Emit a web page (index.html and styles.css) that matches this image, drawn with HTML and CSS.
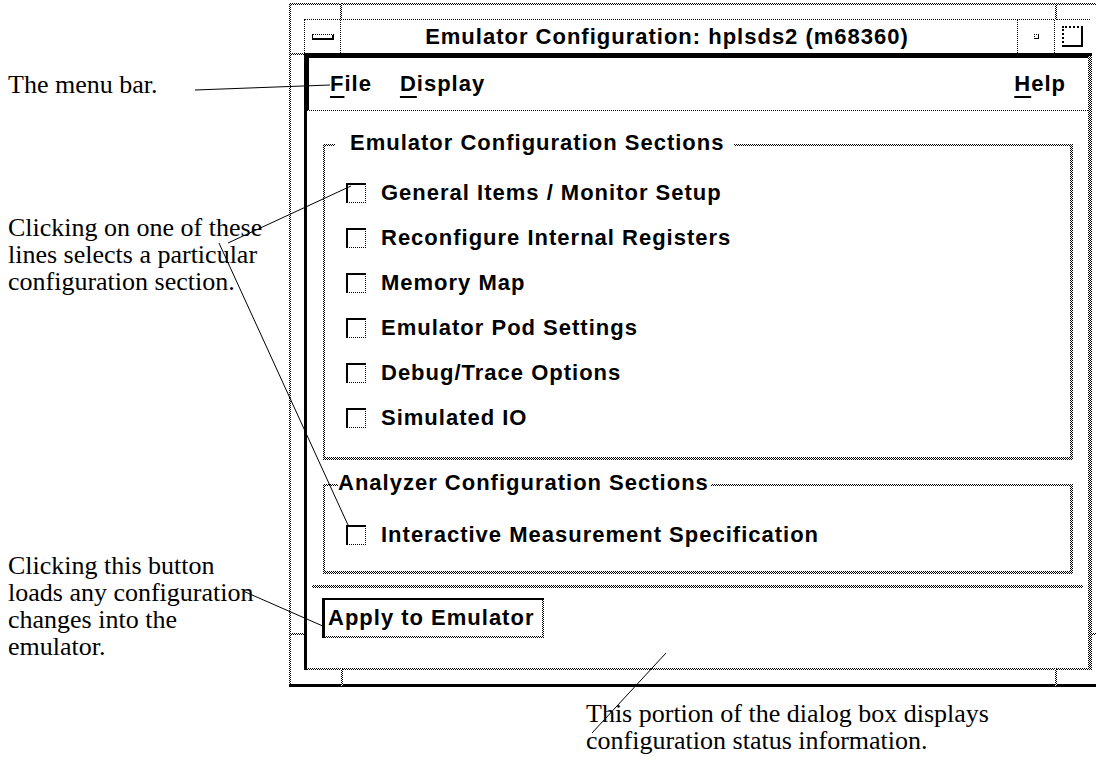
FILE: index.html
```html
<!DOCTYPE html>
<html lang="en">
<head>
    <meta charset="UTF-8">
    <title>Emulator Configuration</title>
    <link rel="stylesheet" href="styles.css">
</head>
<body>
<div class="page">
    <div class="sheet">
        <div class="notes">
            <p class="note note-menu">The menu bar.</p>
            <p class="note note-sections">Clicking on one of these<br>lines selects a particular<br>configuration section.</p>
            <p class="note note-apply">Clicking this button<br>loads any configuration<br>changes into the<br>emulator.</p>
        </div>

        <div class="window">
            <span class="tick tick-v" style="left:51px;top:0"></span>
            <span class="tick tick-v" style="left:766px;top:0"></span>
            <span class="tick tick-h" style="left:0;top:50px"></span>
            <span class="tick tick-h" style="left:0;top:630px"></span>
            <span class="tick tick-v" style="left:52px;top:666px"></span>
            <span class="tick tick-v" style="left:766px;top:666px"></span>
            <span class="tick tick-h" style="left:803px;top:630px"></span>

            <div class="window-inner">
                <div class="titlebar">
                    <div class="tb-cell tb-menu"><span class="menu-glyph"></span></div>
                    <div class="tb-cell tb-title">Emulator Configuration: hplsds2 (m68360)</div>
                    <div class="tb-cell tb-min"><span class="min-glyph"></span></div>
                    <div class="tb-cell tb-max"><span class="max-glyph"></span></div>
                </div>

                <div class="client">
                    <div class="client-inner">
                        <div class="menubar">
                            <span class="menu-item"><u>F</u>ile</span>
                            <span class="menu-item"><u>D</u>isplay</span>
                            <span class="menu-spacer"></span>
                            <span class="menu-item"><u>H</u>elp</span>
                        </div>

                        <div class="sections">
                            <div class="group group-emu">
                                <div class="group-title">Emulator Configuration Sections</div>
                                <div class="group-body">
                                    <div class="row"><span class="check"></span>General Items / Monitor Setup</div>
                                    <div class="row"><span class="check"></span>Reconfigure Internal Registers</div>
                                    <div class="row"><span class="check"></span>Memory Map</div>
                                    <div class="row"><span class="check"></span>Emulator Pod Settings</div>
                                    <div class="row"><span class="check"></span>Debug/Trace Options</div>
                                    <div class="row"><span class="check"></span>Simulated IO</div>
                                </div>
                            </div>

                            <div class="group group-ana">
                                <div class="group-title">Analyzer Configuration Sections</div>
                                <div class="group-body">
                                    <div class="row"><span class="check"></span>Interactive Measurement Specification</div>
                                </div>
                            </div>
                        </div>

                        <div class="separator"></div>

                        <div class="actions">
                            <button class="apply" type="button"><span>Apply to Emulator</span></button>
                        </div>
                    </div>
                </div>
            </div>
        </div>
    </div>

    <p class="note note-status">This portion of the dialog box displays<br>configuration status information.</p>

    <!-- leader lines from the notes to the window -->
    <svg class="leaders" width="1096" height="763" viewBox="0 0 1096 763">
        <line x1="195" y1="90" x2="330" y2="85"/>
        <line x1="228" y1="243" x2="351" y2="186"/>
        <line x1="219" y1="243" x2="348" y2="525"/>
        <line x1="243" y1="591" x2="325" y2="627"/>
        <line x1="666" y1="653" x2="592" y2="733"/>
    </svg>
</div>
</body>
</html>
```

FILE: styles.css
```css
/* monochrome motif look: gray is a 1px checkerboard */
:root {
    --dither: repeating-conic-gradient(#000 0 25%, #fff 0 50%) 0 0 / 2px 2px;
}

body {
    margin: 0;
    background: #fff;
    color: #000;
    font-family: "Liberation Serif", "Times New Roman", serif;
    overflow: hidden;
}

.page {
    position: relative;
    width: 1096px;
    height: 763px;
    overflow: hidden;
}

.sheet {
    display: flex;
    align-items: flex-start;
}

.notes {
    width: 289px;
    flex: none;
    padding-left: 8px;
    box-sizing: border-box;
}

.note {
    margin: 0;
    font-size: 26px;
    line-height: 27px;
}

.note-menu { margin-top: 71px; }
.note-sections { margin-top: 116px; }
.note-apply { margin-top: 257px; }

.note-status {
    margin-top: 13px;
    padding-left: 586px;
}

/* window frame */
.window {
    position: relative;
    flex: none;
    width: 820px;
    margin-top: 3px;
    padding: 2px 0 0 2px;
    background: var(--dither);
    border-bottom: 3px solid #000;
    font-family: "Liberation Sans", Arial, sans-serif;
    font-weight: bold;
    font-size: 22px;
    letter-spacing: 1px;
}

.window-inner {
    background: #fff;
    padding: 14px 0 14px 13px;
}

.tick {
    position: absolute;
    background: var(--dither);
}

.tick-v { width: 2px; height: 17px; }
.tick-h { width: 15px; height: 2px; }

/* title bar */
.titlebar {
    display: flex;
    width: 786px;
    height: 34px;
    box-sizing: border-box;
    border-top: 1px dotted #000;
    border-left: 1px dotted #000;
}

.tb-cell {
    display: flex;
    align-items: center;
    justify-content: center;
    border-right: 1px dotted #000;
}

.tb-menu { width: 35px; }
.tb-title { flex: 1; padding-right: 24px; }
.tb-min { width: 36px; }
.tb-max { width: 35px; border-right: none; }

.menu-glyph {
    width: 19px;
    height: 3px;
    border-top: 1px dotted #000;
    border-left: 1px solid #000;
    border-right: 2px solid #000;
    border-bottom: 2px solid #000;
}

.min-glyph {
    width: 3px;
    height: 3px;
    border-left: 1px dotted #000;
    border-top: 1px dotted #000;
    border-right: 1px solid #000;
    border-bottom: 1px solid #000;
}

.max-glyph {
    width: 17px;
    height: 17px;
    border-left: 2px dotted #000;
    border-top: 2px dotted #000;
    border-right: 2px solid #000;
    border-bottom: 2px solid #000;
}

/* client area */
.client {
    width: 788px;
    height: 617px;
    box-sizing: border-box;
    border-top: 3px solid #000;
    border-left: 3px solid #000;
    padding: 0 4px 2px 0;
    background: var(--dither);
}

.client-inner {
    height: 100%;
    background: #fff;
}

.menubar {
    display: flex;
    align-items: center;
    height: 52px;
    padding: 0 22px 0 21px;
    border-top: 2px solid #000;
    border-left: 2px solid #000;
    border-bottom: 1px dotted #000;
}

.menu-item + .menu-item { margin-left: 28px; }
.menu-spacer { flex: 1; }

.menu-item u {
    text-decoration-thickness: 2px;
    text-underline-offset: 5px;
}

.sections {
    padding: 33px 15px 0 16px;
}

.group {
    position: relative;
    padding: 2px 3px 3px 2px;
    background: var(--dither);
}

.group + .group { margin-top: 24px; }

.group-body {
    background: #fff;
    padding: 24px 0 17px 21px;
}

.group-ana .group-body { padding: 26px 0 14px 21px; }

.group-title {
    position: absolute;
    top: -13px;
    line-height: 24px;
    background: #fff;
}

.group-emu .group-title { left: 12px; padding: 0 10px 0 15px; }
.group-ana .group-title { left: 15px; padding: 0 2px 0 0; }

.row {
    display: flex;
    align-items: center;
    gap: 15px;
    height: 45px;
}

.check {
    width: 20px;
    height: 20px;
    box-sizing: border-box;
    border-top: 2px solid #000;
    border-left: 2px solid #000;
    border-right: 1px dotted #000;
    border-bottom: 1px dotted #000;
}

.separator {
    height: 3px;
    margin: 11px 5px 0 5px;
    background: var(--dither);
}

.actions {
    padding: 10px 0 0 15px;
}

.apply {
    display: block;
    margin: 0;
    padding: 0 2px 2px 0;
    border: none;
    border-top: 2px solid #000;
    border-left: 3px solid #000;
    border-radius: 0;
    background: var(--dither);
    font: inherit;
    letter-spacing: inherit;
    color: #000;
}

.apply span {
    display: block;
    height: 36px;
    line-height: 36px;
    padding: 0 8px 0 3px;
    background: #fff;
}

.leaders {
    position: absolute;
    top: 0;
    left: 0;
    pointer-events: none;
}

.leaders line {
    stroke: #000;
    stroke-width: 1;
}
```
